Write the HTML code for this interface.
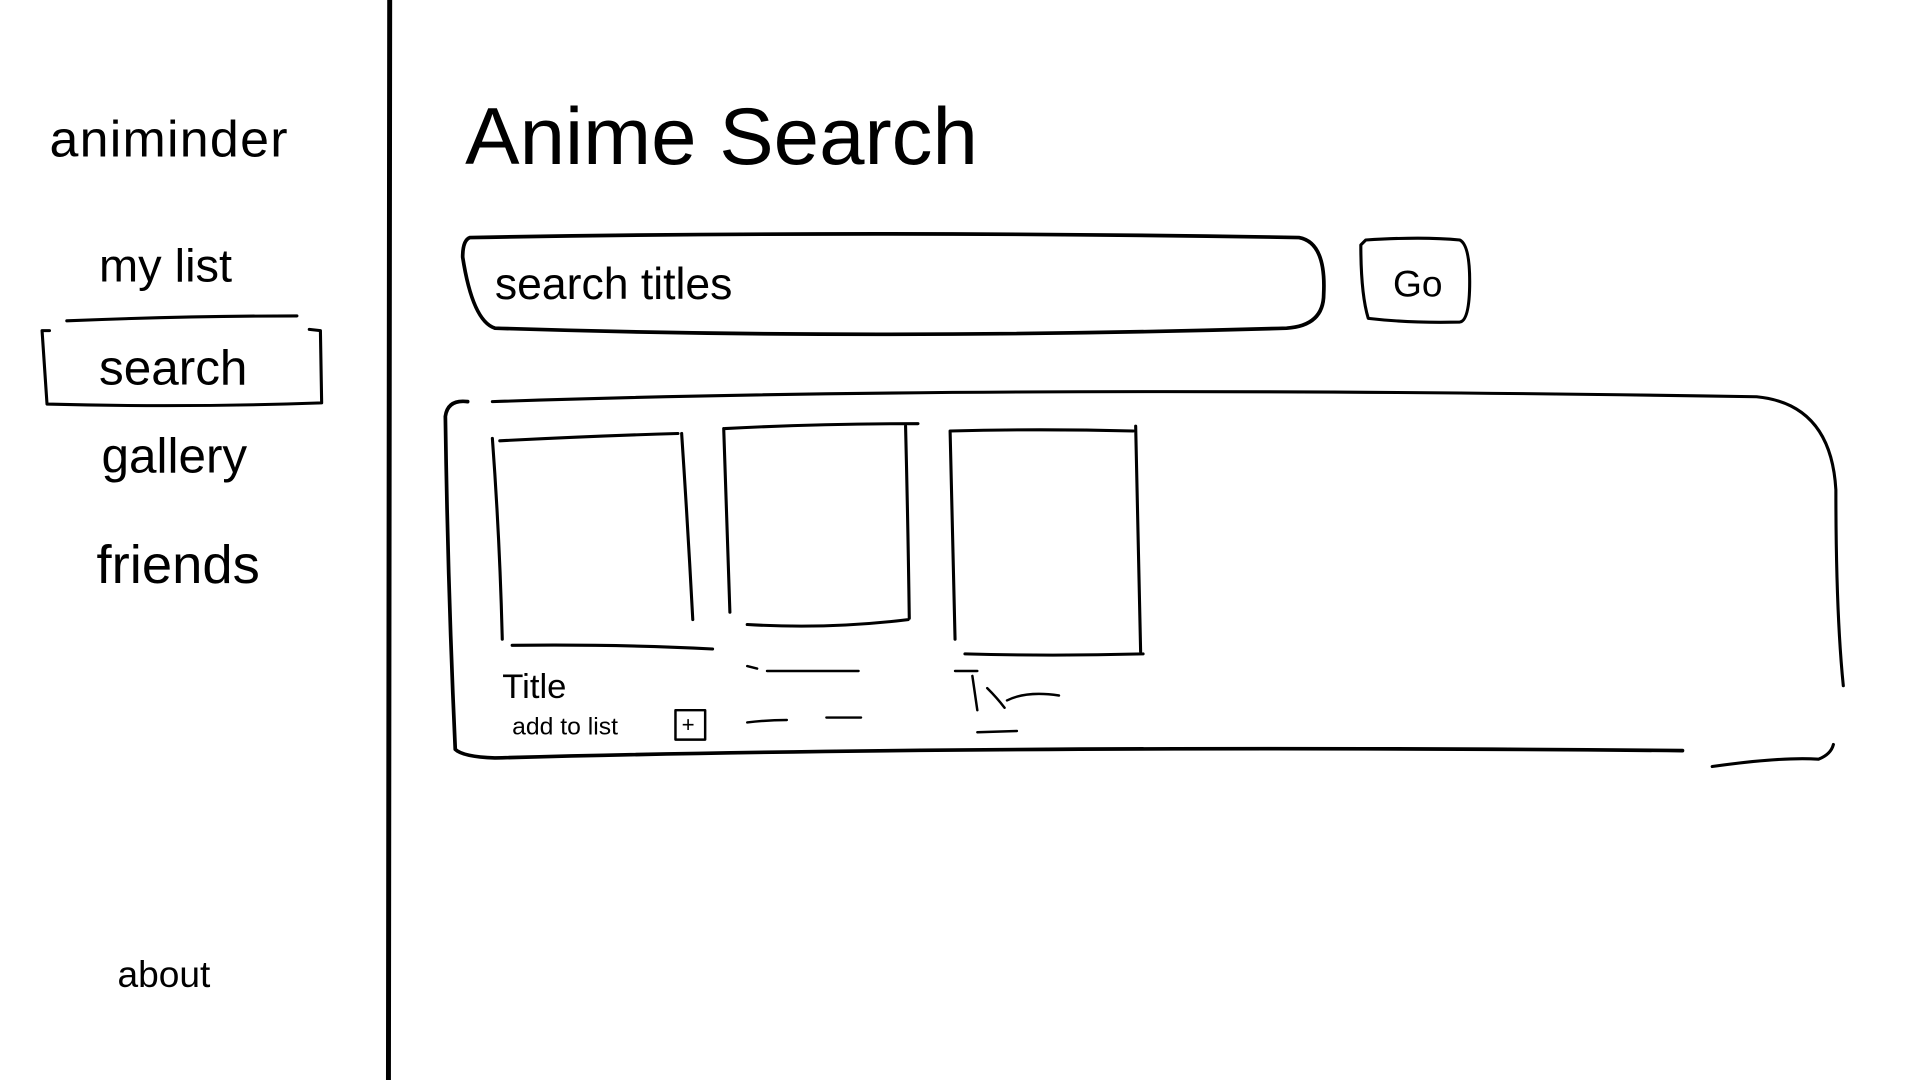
<!DOCTYPE html>
<html><head><meta charset="utf-8"><style>
html,body{margin:0;padding:0;background:#fff;width:1920px;height:1080px;overflow:hidden}
svg{display:block}
text{font-family:"Liberation Sans",sans-serif;fill:#000}
</style></head><body>
<svg width="1920" height="1080" viewBox="0 0 1552 882" preserveAspectRatio="none" fill="none" stroke="#000" stroke-linecap="round" stroke-linejoin="round">
<line x1="315" y1="0" x2="314" y2="882" stroke-width="4"/>
<g stroke="none">
<text x="40" y="128" font-size="42" letter-spacing="1">animinder</text>
<text x="80" y="230" font-size="38">my list</text>
<text x="80" y="314" font-size="40">search</text>
<text x="82" y="386" font-size="40">gallery</text>
<text x="78" y="476" font-size="44">friends</text>
<text x="95" y="806" font-size="30">about</text>
<text x="376" y="134" font-size="66">Anime Search</text>
<text x="400" y="244" font-size="36">search titles</text>
<text x="1126" y="242" font-size="30">Go</text>
<text x="406" y="570" font-size="28">Title</text>
<text x="414" y="600" font-size="20">add to list</text>
<text x="551" y="598" font-size="18">+</text>
</g>
<path d="M54 262 Q150 258 240 258" stroke-width="2.5"/>
<path d="M40 270 L34 270 L38 330 Q150 333 260 329 L259 270 L250 269" stroke-width="2.5"/>
<path d="M380 194 Q700 188 1050 194 Q1072 198 1070 240 Q1070 266 1040 268 Q700 278 400 268 Q382 262 374 210 Q374 196 380 194 Z" stroke-width="3"/>
<path d="M1104 196 Q1150 193 1180 196 Q1188 200 1188 230 Q1188 262 1180 263 Q1140 264 1106 260 Q1100 240 1100 200 Z" stroke-width="2.5"/>
<path d="M378 328 Q362 326 360 340 Q362 480 368 612 Q374 618 400 619 Q800 608 1360 613" stroke-width="3"/>
<path d="M398 328 Q800 314 1420 324 Q1480 330 1484 400 Q1484 500 1490 560" stroke-width="2.5"/>
<path d="M1384 626 Q1440 618 1470 620 Q1480 616 1482 608" stroke-width="2.5"/>
<path d="M404 360 Q480 356 548 354 M398 358 Q404 440 406 522 M551 354 Q556 430 560 506 M414 527 Q500 526 576 530" stroke-width="2.5"/>
<path d="M586 350 Q660 346 742 346 M585 350 Q588 430 590 500 M732 348 Q734 430 735 505 M604 510 Q670 514 734 506" stroke-width="2.5"/>
<path d="M768 352 Q840 350 916 352 M768 352 Q770 440 772 522 M918 348 Q920 440 922 532 M780 534 Q850 536 924 534" stroke-width="2.5"/>
<path d="M546 580 H570 V604 H546 Z" stroke-width="2"/>
<path d="M604 544 L612 546 M620 548 Q660 548 694 548 M604 590 Q620 588 636 588 M668 586 L696 586" stroke-width="2"/>
<path d="M772 548 L790 548 M786 552 L790 580 M798 562 Q806 570 812 578 M814 572 Q830 564 856 568 M790 598 L822 597" stroke-width="2"/>
</svg>
</body></html>
